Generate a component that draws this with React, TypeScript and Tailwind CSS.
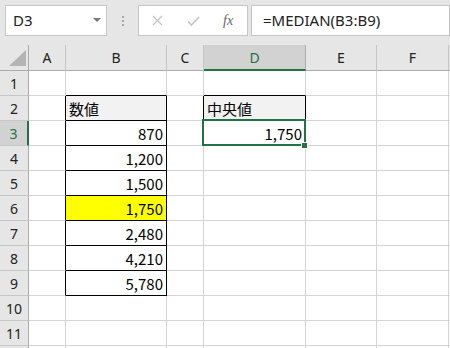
import React from "react";

const cols = ["A", "B", "C", "D", "E", "F"];
const widths = ["w-[37px]", "w-[101px]", "w-[37px]", "w-[102px]", "w-[71px]", "w-[72px]"];

type Cell = { text?: string; right?: boolean; fill?: string; box?: boolean };

// row -> column index -> cell
const data: Record<number, Record<number, Cell>> = {
  2: { 1: { text: "数値", fill: "bg-[#f2f2f2]", box: true }, 3: { text: "中央値", fill: "bg-[#f2f2f2]", box: true } },
  3: { 1: { text: "870", right: true, box: true }, 3: { text: "1,750", right: true } },
  4: { 1: { text: "1,200", right: true, box: true } },
  5: { 1: { text: "1,500", right: true, box: true } },
  6: { 1: { text: "1,750", right: true, fill: "bg-[#ffff00]", box: true } },
  7: { 1: { text: "2,480", right: true, box: true } },
  8: { 1: { text: "4,210", right: true, box: true } },
  9: { 1: { text: "5,780", right: true, box: true } },
};

function boxed(r: number, c: number) {
  return !!data[r]?.[c]?.box;
}

export default function App() {
  const rows = [1, 2, 3, 4, 5, 6, 7, 8, 9, 10, 11];
  return (
    <div className="w-[450px] h-[348px] overflow-hidden bg-white font-['Noto_Sans',sans-serif] relative">
      {/* formula toolbar */}
      <div className="h-[45px] bg-[#e6e6e6] flex items-start pt-[5px] pl-[5px]">
        <div className="w-[102px] h-[31px] bg-white border border-[#c6c6c6] flex items-center justify-between pl-[7px] pr-[5px]">
          <span className="text-[15px] text-[#222] leading-none">D3</span>
          <svg width="8" height="5" viewBox="0 0 8 5"><path d="M0 0h8L4 4z" fill="#777" /></svg>
        </div>
        <div className="w-[31px] h-[31px] flex flex-col items-center justify-center gap-[2px]">
          <div className="w-[2px] h-[2px] bg-[#a8a8a8]" />
          <div className="w-[2px] h-[2px] bg-[#a8a8a8]" />
          <div className="w-[2px] h-[2px] bg-[#a8a8a8]" />
        </div>
        <div className="w-[110px] h-[31px] bg-white border border-[#c6c6c6] flex items-center pl-[12px]">
          <svg width="11" height="11" viewBox="0 0 11 11" className="ml-[1px]">
            <path d="M1 1l9 9M10 1l-9 9" stroke="#c4c4c4" strokeWidth="1.3" />
          </svg>
          <svg width="13" height="10" viewBox="0 0 13 10" className="ml-[24px]">
            <path d="M1 5.5l3.5 3.5L12 1" stroke="#c4c4c4" strokeWidth="1.6" fill="none" />
          </svg>
          <span className="ml-[23px] text-[14px] italic text-[#666] font-['Liberation_Serif',serif] leading-none">fx</span>
        </div>
        <div className="ml-[3px] w-[199px] h-[31px] bg-white border border-[#c6c6c6] flex items-center pl-[11px]">
          <span className="text-[15px] text-[#222] leading-none">=MEDIAN(B3:B9)</span>
        </div>
      </div>

      {/* column header */}
      <div className="flex h-[26px]">
        <div className="w-[29px] bg-[#e6e6e6] border-r border-b border-[#ababab] relative">
          <svg width="18" height="17" viewBox="0 0 18 17" className="absolute left-[9px] top-[5px]">
            <path d="M17 0V16H0z" fill="#b4b4b4" />
          </svg>
        </div>
        {cols.map((c, i) => (
          <div
            key={c}
            className={`${widths[i]} flex items-center justify-center text-[14px] border-r ${
              c === "D"
                ? "bg-[#d2d2d2] text-[#217346] border-r-[#ababab] border-b-2 border-b-[#217346]"
                : "bg-[#e6e6e6] text-[#222] border-r-[#c6c6c6] border-b border-b-[#ababab]"
            }`}
          >
            {c}
          </div>
        ))}
        <div className="flex-1 bg-[#e6e6e6] border-b border-[#ababab]" />
      </div>

      {/* rows */}
      {rows.map((r) => (
        <div key={r} className="flex h-[25px]">
          <div
            className={`w-[29px] flex items-center justify-center text-[14px] border-b border-b-[#c6c6c6] ${
              r === 3
                ? "bg-[#d2d2d2] text-[#217346] border-r-2 border-r-[#217346]"
                : "bg-[#e6e6e6] text-[#222] border-r border-r-[#ababab]"
            }`}
          >
            {r}
          </div>
          {cols.map((c, i) => {
            const cell = data[r]?.[i];
            const rightBlack = boxed(r, i) || boxed(r, i + 1);
            const bottomBlack = boxed(r, i) || boxed(r + 1, i);
            return (
              <div
                key={c}
                className={`${widths[i]} border-r border-b flex items-center px-[3px] pt-[2px] text-[15px] text-black font-['Noto_Sans_CJK_JP',sans-serif] ${
                  cell?.fill ?? ""
                } ${rightBlack ? "border-r-black" : "border-r-[#d4d4d4]"} ${
                  bottomBlack ? "border-b-black" : "border-b-[#d4d4d4]"
                } ${cell?.right ? "justify-end" : "justify-start"}`}
              >
                {cell?.text}
              </div>
            );
          })}
          <div className="flex-1 border-b border-[#d4d4d4]" />
        </div>
      ))}

      {/* start of row 12, cut off by the window */}
      <div className="flex h-[25px]">
        <div className="w-[29px] bg-[#e6e6e6] border-r border-[#ababab]" />
        {cols.map((c, i) => (
          <div key={c} className={`${widths[i]} border-r border-[#d4d4d4]`} />
        ))}
      </div>

      {/* active cell D3 */}
      <div className="absolute left-[202px] top-[119px] w-[104px] h-[27px] border-2 border-[#217346] pointer-events-none" />
      <div className="absolute left-[301px] top-[142px] w-[7px] h-[7px] bg-[#217346] border border-white" />
    </div>
  );
}
